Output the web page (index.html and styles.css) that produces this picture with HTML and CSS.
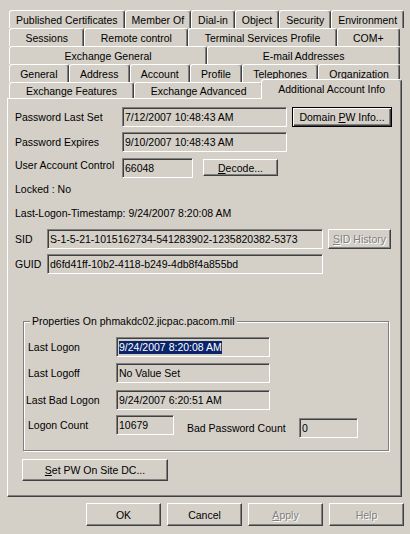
FILE: index.html
```html
<!DOCTYPE html>
<html lang="en">
  <head>
    <meta charset="UTF-8" />
    <title>User Properties</title>
    <link rel="stylesheet" href="styles.css">
  </head>
  <body>
    <div class="dialog">
      <div class="tabs">
        <div class="tab-row">
          <div class="tab">Published Certificates</div>
          <div class="tab">Member Of</div>
          <div class="tab">Dial-in</div>
          <div class="tab">Object</div>
          <div class="tab">Security</div>
          <div class="tab">Environment</div>
        </div>
        <div class="tab-row">
          <div class="tab">Sessions</div>
          <div class="tab">Remote control</div>
          <div class="tab">Terminal Services Profile</div>
          <div class="tab">COM+</div>
        </div>
        <div class="tab-row">
          <div class="tab">Exchange General</div>
          <div class="tab">E-mail Addresses</div>
        </div>
        <div class="tab-row">
          <div class="tab">General</div>
          <div class="tab">Address</div>
          <div class="tab">Account</div>
          <div class="tab">Profile</div>
          <div class="tab">Telephones</div>
          <div class="tab">Organization</div>
        </div>
        <div class="tab-row tab-row-front">
          <div class="tab">Exchange Features</div>
          <div class="tab">Exchange Advanced</div>
          <div class="tab active">Additional Account Info</div>
        </div>
      </div>

      <div class="panel">
        <div class="row">
          <span class="lbl">Password Last Set</span>
          <div class="field field-date">7/12/2007 10:48:43 AM</div>
          <button class="btn btn-default btn-domain">Domain <u>P</u>W Info...</button>
        </div>
        <div class="row row-gap5">
          <span class="lbl">Password Expires</span>
          <div class="field field-date">9/10/2007 10:48:43 AM</div>
        </div>
        <div class="row row-top row-uac">
          <span class="lbl">User Account Control</span>
          <div class="field field-uac">66048</div>
          <button class="btn btn-decode"><u>D</u>ecode...</button>
        </div>
        <p class="line line-locked">Locked : No</p>
        <p class="line line-stamp">Last-Logon-Timestamp: 9/24/2007 8:20:08 AM</p>
        <div class="row row-sid">
          <span class="lbl lbl-short">SID</span>
          <div class="field field-id">S-1-5-21-1015162734-541283902-1235820382-5373</div>
          <button class="btn btn-sid" disabled><u>S</u>ID History</button>
        </div>
        <div class="row row-gap5">
          <span class="lbl lbl-short">GUID</span>
          <div class="field field-id">d6fd41ff-10b2-4118-b249-4db8f4a855bd</div>
        </div>

        <fieldset class="group">
          <legend>Properties On phmakdc02.jicpac.pacom.mil</legend>
          <div class="row grow grow-first">
            <span class="glbl">Last Logon</span>
            <div class="field field-g"><span class="sel">9/24/2007 8:20:08 AM</span></div>
          </div>
          <div class="row grow grow-6">
            <span class="glbl">Last Logoff</span>
            <div class="field field-g">No Value Set</div>
          </div>
          <div class="row grow grow-7">
            <span class="glbl glbl-shift">Last Bad Logon</span>
            <div class="field field-g">9/24/2007 6:20:51 AM</div>
          </div>
          <div class="row row-top grow grow-5">
            <span class="glbl glbl-tall">Logon Count</span>
            <div class="field field-count">10679</div>
            <span class="bad-lbl">Bad Password Count</span>
            <div class="field field-bad">0</div>
          </div>
        </fieldset>

        <button class="btn btn-setpw"><u>S</u>et PW On Site DC...</button>
      </div>

      <div class="footer">
        <button class="btn btn-foot">OK</button>
        <button class="btn btn-foot">Cancel</button>
        <button class="btn btn-foot" disabled><u>A</u>pply</button>
        <button class="btn btn-foot" disabled>Help</button>
      </div>
    </div>
  </body>
</html>
```

FILE: styles.css
```css
* {
  box-sizing: border-box;
}

body {
  margin: 0;
  background: #d4d0c8;
  font-family: "Liberation Sans", Arial, sans-serif;
  font-size: 10.5px;
  color: #000;
}

.dialog {
  width: 410px;
  height: 534px;
  padding-top: 10px;
}

/* tabs */
.tabs {
  margin: 0 10px 0 9px;
}

.tab-row {
  display: flex;
  height: 18px;
}

.tab {
  flex: 1 1 auto;
  display: flex;
  align-items: center;
  justify-content: center;
  padding: 0 6px;
  white-space: nowrap;
  border: 1px solid;
  border-bottom: none;
  border-color: #fff #404040 transparent #fff;
  border-radius: 3px 3px 0 0;
  box-shadow: inset -1px 0 #808080;
  background: #d4d0c8;
}

.tab-row-front {
  height: 16px;
  align-items: flex-end;
}

.tab-row-front .tab {
  height: 16px;
}

.tab.active {
  height: 20px;
  margin: 0 -2px -1px -2px;
  position: relative;
  z-index: 1;
  padding-bottom: 2px;
}

/* panel */
.panel {
  margin-left: 7px;
  width: 395px;
  height: 399px;
  border: 1px solid;
  border-color: #fff #404040 #404040 #fff;
  box-shadow: inset -1px -1px #808080;
  padding: 8px 7px 0 7px;
}

.row {
  display: flex;
  align-items: center;
}

.row-top {
  align-items: flex-start;
}

.row-gap5 {
  margin-top: 5px;
}

.row-uac {
  margin-top: 6px;
}

.row-sid {
  margin-top: 9px;
}

.lbl {
  width: 107px;
  line-height: 14px;
  white-space: nowrap;
}

.lbl-short {
  width: 32px;
}

.line {
  margin: 0;
  line-height: 14px;
}

.line-locked {
  margin-top: 4px;
}

.line-stamp {
  margin-top: 10px;
}

.field {
  height: 20px;
  border: 1px solid;
  border-color: #808080 #fff #fff #808080;
  box-shadow: inset 1px 1px #404040, inset -1px -1px #d4d0c8;
  padding: 0 2px;
  display: flex;
  align-items: center;
  white-space: nowrap;
  overflow: hidden;
}

.field-date {
  width: 165px;
}

.field-uac {
  width: 71px;
}

.field-id {
  width: 276px;
}

.field-g {
  width: 154px;
}

.field-count {
  width: 58px;
}

.field-bad {
  width: 59px;
  margin-top: 3px;
}

.sel {
  background: #0a246a;
  color: #fff;
  line-height: 13px;
}

/* buttons */
.btn {
  font: inherit;
  color: #000;
  background: #d4d0c8;
  border: 1px solid;
  border-color: #fff #404040 #404040 #fff;
  box-shadow: inset -1px -1px #808080;
  padding: 0;
  border-radius: 0;
  white-space: nowrap;
}

.btn:disabled {
  color: #808080;
  text-shadow: 1px 1px #fff;
}

.btn-default {
  border-color: #000;
  box-shadow: inset 1px 1px #fff, inset -1px -1px #404040, inset -2px -2px #808080;
}

.btn-domain {
  margin-left: 5px;
  width: 100px;
  height: 20px;
}

.btn-decode {
  margin: 1px 0 0 10px;
  width: 75px;
  height: 17px;
}

.btn-sid {
  margin-left: 5px;
  width: 63px;
  height: 20px;
}

/* group box */
.group {
  margin: 40px 0 0 8px;
  width: 366px;
  min-width: 0;
  padding: 0 0 12px 4px;
  border: 1px solid #808080;
  box-shadow: inset 1px 1px #fff, 1px 1px #fff;
}

.group legend {
  margin-left: 2px;
  padding: 0 2px;
  line-height: 14px;
  background: #d4d0c8;
}

.grow-first {
  margin-top: 9px;
}

.grow-5 {
  margin-top: 5px;
}

.grow-6 {
  margin-top: 6px;
}

.grow-7 {
  margin-top: 7px;
}

.glbl {
  width: 88px;
  white-space: nowrap;
}

.glbl-shift {
  margin-left: -2px;
  width: 90px;
}

.glbl-tall {
  line-height: 20px;
}

.bad-lbl {
  margin: 3px 0 0 13px;
  width: 112px;
  line-height: 20px;
  white-space: nowrap;
}

.btn-setpw {
  margin: 8px 0 0 7px;
  width: 146px;
  height: 22px;
}

.footer {
  display: flex;
  justify-content: flex-end;
  gap: 6px;
  padding-right: 6px;
  margin-top: 6px;
}

.btn-foot {
  width: 75px;
  height: 23px;
}
```
